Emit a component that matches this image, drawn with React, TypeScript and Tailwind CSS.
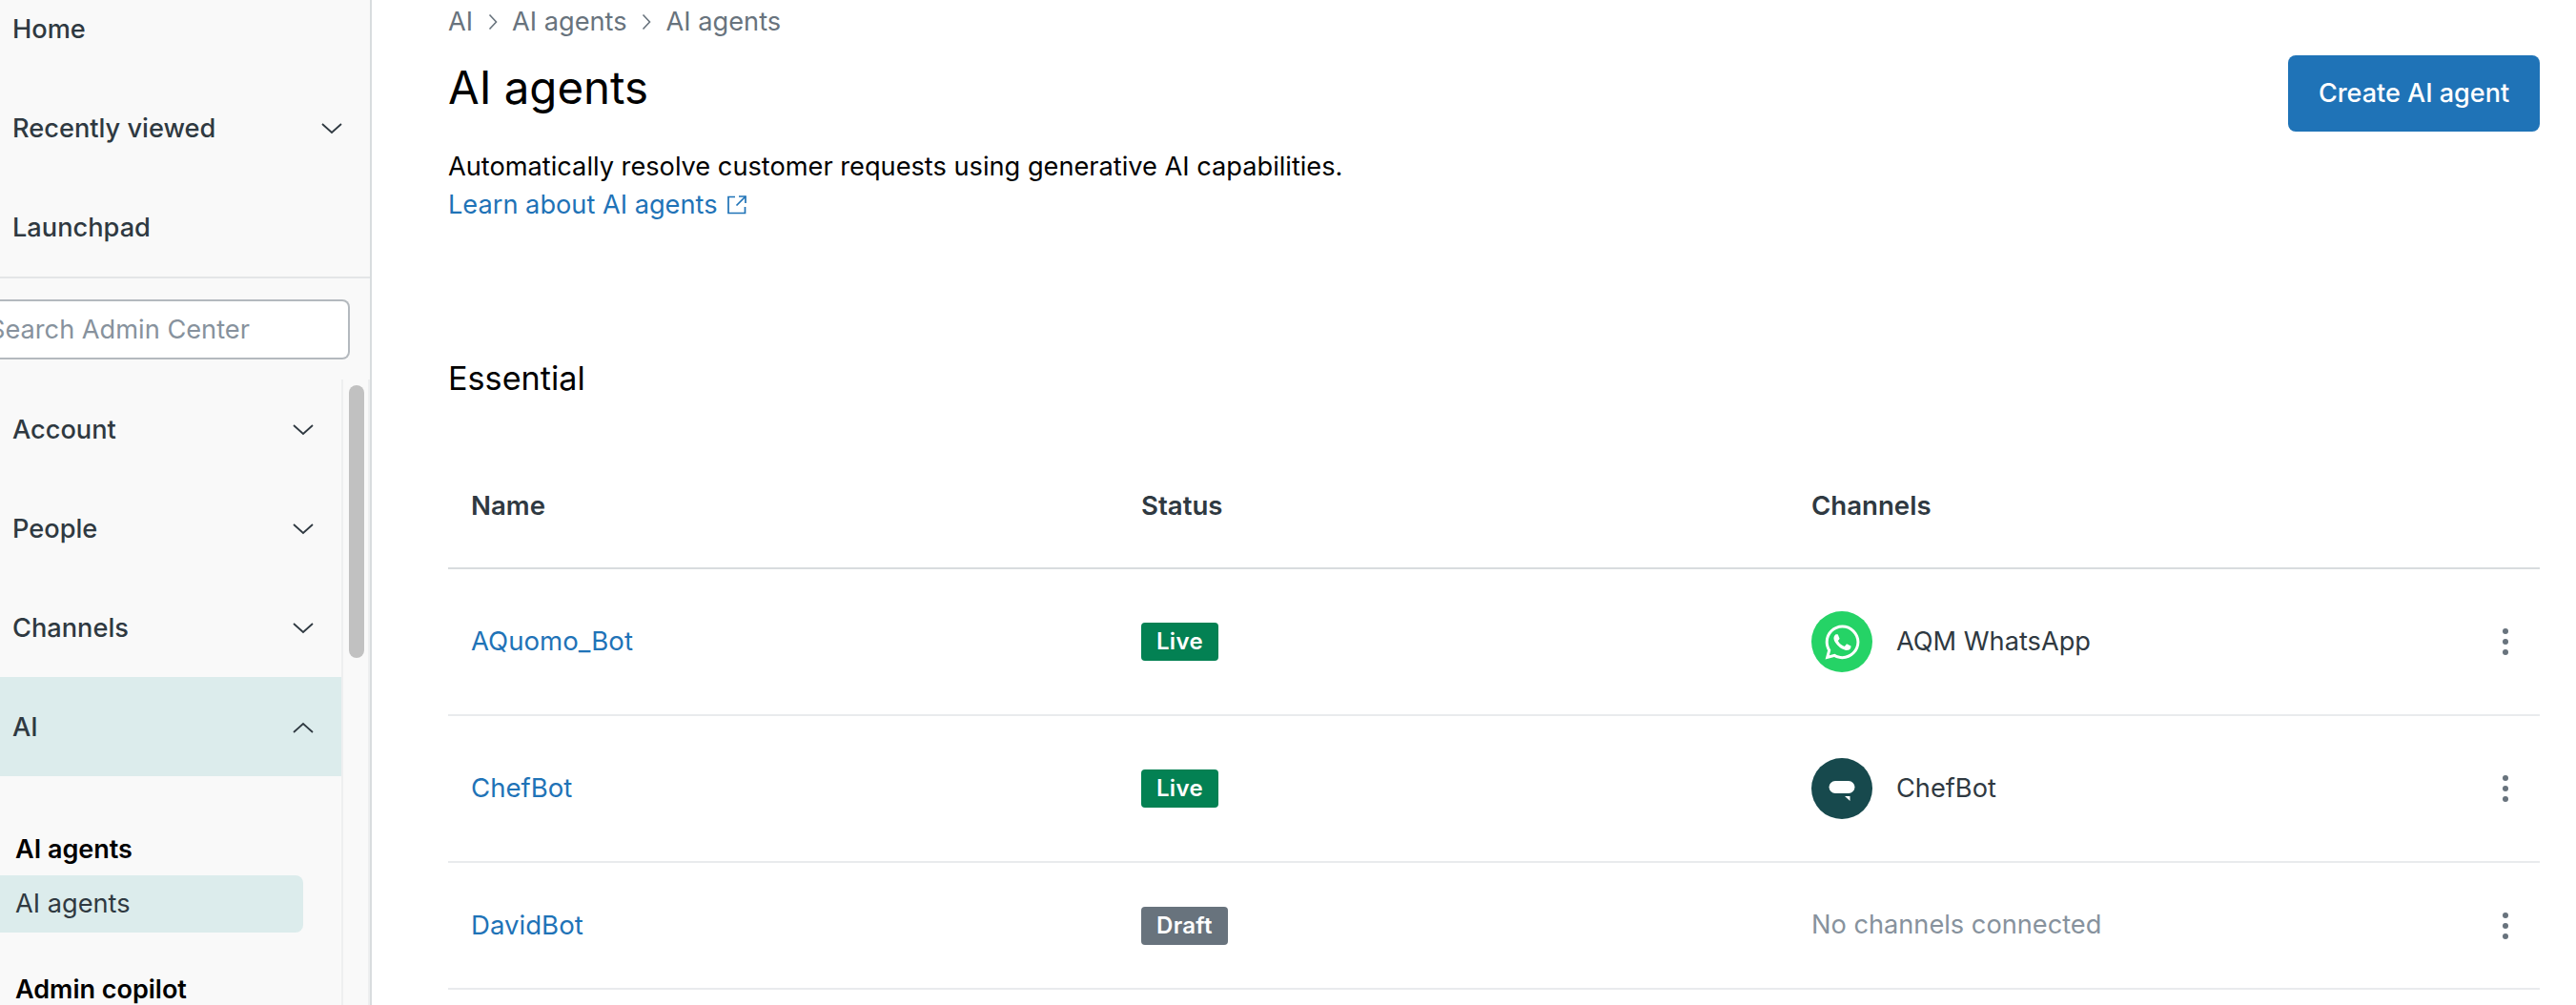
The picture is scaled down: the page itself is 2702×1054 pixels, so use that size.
import { FaWhatsapp } from "react-icons/fa";

function Chevron({ up = false }: { up?: boolean }) {
	return (
		<svg width="22" height="12" viewBox="0 0 22 12" fill="none" className="shrink-0">
			<path
				d={up ? "M1 11 L11 2 L21 11" : "M1 1 L11 10 L21 1"}
				stroke="#2f3941"
				strokeWidth="1.8"
			/>
		</svg>
	);
}

function Crumb() {
	return (
		<svg width="10" height="18" viewBox="0 0 10 18" fill="none" className="shrink-0">
			<path d="M1.5 1.5 L8.5 9 L1.5 16.5" stroke="#68737d" strokeWidth="1.6" />
		</svg>
	);
}

function NavRow({ label, open, active }: { label: string; open?: boolean; active?: boolean }) {
	return (
		<div
			className={`flex h-[104px] items-center justify-between pl-[13px] pr-[29px] pt-[2px] text-[27.2px] font-medium text-[#2f3941] ${
				active ? "bg-[#dcecec]" : ""
			}`}
		>
			<span>{label}</span>
			<Chevron up={open} />
		</div>
	);
}

function Sidebar() {
	return (
		<aside className="flex h-full w-[390px] shrink-0 flex-col overflow-hidden border-r-2 border-[#d8dcde] bg-[#f9f9f9]">
			{/* Top links */}
			<div className="-mt-[22px] border-b-2 border-[#e4e6e7] text-[27.2px] font-medium text-[#2f3941]">
				<div className="flex h-[104px] items-center pl-[13px] pt-[2px]">Home</div>
				<div className="flex h-[104px] items-center justify-between pl-[13px] pr-[29px] pt-[2px]">
					<span>Recently viewed</span>
					<Chevron />
				</div>
				<div className="flex h-[104px] items-center pl-[13px] pt-[2px]">Launchpad</div>
			</div>

			{/* Search */}
			<div className="mt-[22px] flex h-[63px] w-[367px] items-center overflow-hidden rounded-r-lg border-y-2 border-r-2 border-[#b4b9be] bg-white pt-[2px]">
				<span className="-ml-[12px] whitespace-nowrap text-[27.2px] text-[#87929d]">Search Admin Center</span>
			</div>

			{/* Nav + scrollbar */}
			<div className="mt-[21px] flex min-h-0 flex-1">
				<div className="w-[358px] shrink-0">
					<NavRow label="Account" />
					<NavRow label="People" />
					<NavRow label="Channels" />
					<NavRow label="AI" open active />

					<div className="mt-[57px] flex h-[40px] items-center pl-[16px] text-[27px] font-semibold text-black">
						AI agents
					</div>
					<div className="mt-[7px] flex h-[60px] w-[318px] items-center rounded-r-lg bg-[#dcecec] pl-[16px] text-[27.2px] text-[#2f3941]">
						AI agents
					</div>
					<div className="mt-[40px] flex h-[40px] items-center pl-[16px] text-[27px] font-semibold text-black">
						Admin copilot
					</div>
				</div>
				<div className="h-full w-[30px] border-x-2 border-[#eeeff0] pl-[6px] pt-[6px]">
					<div className="h-[286px] w-[16px] rounded-lg bg-[#c1c1c1]" />
				</div>
			</div>
		</aside>
	);
}

function Badge({ label, color }: { label: string; color: string }) {
	return (
		<span
			className={`inline-flex h-[40px] items-center rounded-[4px] px-[16px] text-[24px] font-semibold tracking-[0.3px] text-white ${color}`}
		>
			{label}
		</span>
	);
}

function Dots() {
	return (
		<div className="flex flex-col items-center gap-[5px] pr-[33px]">
			<span className="h-[6px] w-[6px] rounded-full bg-[#68737d]" />
			<span className="h-[6px] w-[6px] rounded-full bg-[#68737d]" />
			<span className="h-[6px] w-[6px] rounded-full bg-[#68737d]" />
		</div>
	);
}

function ChefBotIcon() {
	return (
		<svg width="30" height="30" viewBox="0 0 30 30" fill="none">
			<rect x="1.5" y="7" width="27" height="13" rx="6.5" fill="white" />
			<path d="M18 23 H23.5 V28 Z" fill="white" />
		</svg>
	);
}

function Row({
	name,
	badge,
	channel,
	height,
}: {
	name: string;
	badge: React.ReactNode;
	channel: React.ReactNode;
	height: string;
}) {
	return (
		<div className={`flex items-center border-b-2 border-[#e9ebed] ${height}`}>
			<div className="w-[727px] shrink-0 pl-[24px] text-[27.6px] text-[#1f73b7]">{name}</div>
			<div className="w-[703px] shrink-0">{badge}</div>
			<div className="flex-1">{channel}</div>
			<Dots />
		</div>
	);
}

export default function App() {
	return (
		<div className="flex h-[1054px] w-[2702px] overflow-hidden bg-white font-['Inter',sans-serif]">
			<Sidebar />

			<main className="min-w-0 flex-1 pl-[80px] pr-[38px] pt-[2px]">
				{/* Breadcrumbs */}
				<div className="flex h-[40px] items-center gap-[15.5px] pt-[2px] text-[27.2px] text-[#68737d]">
					<span>AI</span>
					<Crumb />
					<span>AI agents</span>
					<Crumb />
					<span>AI agents</span>
				</div>

				{/* Title */}
				<div className="mt-[16px] flex items-start justify-between">
					<h1 className="text-[47.4px] leading-[68px] text-black">AI agents</h1>
					<button
						type="button"
						className="h-[80px] w-[264px] rounded-lg bg-[#1f73b7] text-[27px] font-medium text-white"
					>
						Create AI agent
					</button>
				</div>

				<p className="mt-[17px] text-[27.2px] leading-[40px] text-black">
					Automatically resolve customer requests using generative AI capabilities.
				</p>
				<a className="flex items-center gap-[10px] text-[27.2px] leading-[40px] text-[#1f73b7]">
					Learn about AI agents
					<svg width="20" height="20" viewBox="0 0 20 20" fill="none" stroke="#1f73b7" strokeWidth="1.7">
						<path d="M8 1.5 H1 V18.5 H18.5 V12" />
						<path d="M12 1 H19 V8" />
						<path d="M19 1 L9.5 10.5" />
					</svg>
				</a>

				<h2 className="mt-[138px] text-[34.2px] leading-[48px] text-black">Essential</h2>

				{/* Table */}
				<div className="mt-[45px] flex h-[131px] items-center border-b-2 border-[#d8dcde] text-[27.6px] font-semibold text-[#2f3941]">
					<div className="w-[727px] shrink-0 pl-[24px]">Name</div>
					<div className="w-[703px] shrink-0">Status</div>
					<div>Channels</div>
				</div>
				<Row
					name="AQuomo_Bot"
					height="h-[154px]"
					badge={<Badge label="Live" color="bg-[#038153]" />}
					channel={
						<div className="flex items-center gap-[25px] text-[27.2px] text-[#2f3941]">
							<span className="flex h-[64px] w-[64px] items-center justify-center rounded-full bg-[#25d366]">
								<FaWhatsapp className="h-[41px] w-[41px] text-white" />
							</span>
							AQM WhatsApp
						</div>
					}
				/>
				<Row
					name="ChefBot"
					height="h-[154px]"
					badge={<Badge label="Live" color="bg-[#038153]" />}
					channel={
						<div className="flex items-center gap-[25px] text-[27.2px] text-[#2f3941]">
							<span className="flex h-[64px] w-[64px] items-center justify-center rounded-full bg-[#17494d]">
								<ChefBotIcon />
							</span>
							ChefBot
						</div>
					}
				/>
				<Row
					name="DavidBot"
					height="h-[133px]"
					badge={<Badge label="Draft" color="bg-[#68737d]" />}
					channel={<span className="text-[27.2px] text-[#87929d]">No channels connected</span>}
				/>
			</main>
		</div>
	);
}
